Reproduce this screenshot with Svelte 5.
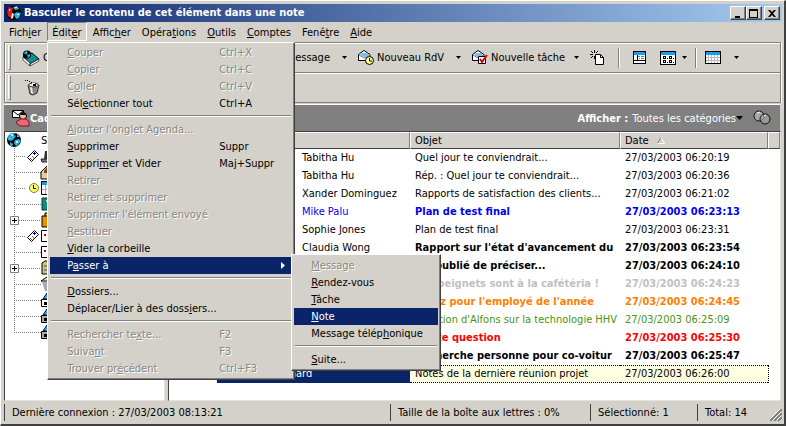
<script lang="ts">
	type Entry = { label?: string; keys?: string; off?: boolean; sub?: boolean; sep?: boolean };

	const menus = ['Fich&ier', 'Édit&er', 'Affic&her', 'Opéra&tions', '&Outils', '&Comptes', 'Fenê&tre', '&Aide'];

	const editMenu: Entry[] = [
		{ label: '&Couper', keys: 'Ctrl+X', off: true },
		{ label: '&Copier', keys: 'Ctrl+C', off: true },
		{ label: 'C&oller', keys: 'Ctrl+V', off: true },
		{ label: 'Sél&ectionner tout', keys: 'Ctrl+A' },
		{ sep: true },
		{ label: '&Ajouter l\'onglet Agenda...', off: true },
		{ label: '&Supprimer', keys: 'Suppr' },
		{ label: 'Suppri&mer et Vider', keys: 'Maj+Suppr' },
		{ label: 'Retirer', off: true },
		{ label: 'Retirer et supprimer', off: true },
		{ label: 'Supprimer l\'élément envoyé', off: true },
		{ label: '&Restituer', off: true },
		{ label: '&Vider la corbeille' },
		{ label: 'P&asser à', sub: true },
		{ sep: true },
		{ label: '&Dossiers...' },
		{ label: 'Déplacer/Lier à des doss&iers...' },
		{ sep: true },
		{ label: 'Rechercher te&xte...', keys: 'F2', off: true },
		{ label: 'Suiva&nt', keys: 'F3', off: true },
		{ label: 'Trouver pr&écédent', keys: 'Ctrl+F3', off: true }
	];

	const switchMenu: Entry[] = [
		{ label: '&Message', off: true },
		{ label: '&Rendez-vous' },
		{ label: '&Tâche' },
		{ label: '&Note' },
		{ label: 'Message télép&honique' },
		{ sep: true },
		{ label: '&Suite...' }
	];

	const mails = [
		{ from: 'Tabitha Hu', subject: 'Quel jour te conviendrait...', time: '06:20:19' },
		{ from: 'Tabitha Hu', subject: 'Rép. : Quel jour te conviendrait...', time: '06:20:36' },
		{ from: 'Xander Dominguez', subject: 'Rapports de satisfaction des clients...', time: '06:21:02' },
		{ from: 'Mike Palu', subject: 'Plan de test final', time: '06:23:13', bold: true, color: 'blue' },
		{ from: 'Sophie Jones', subject: 'Plan de test final', time: '06:23:31' },
		{ from: 'Claudia Wong', subject: 'Rapport sur l\'état d\'avancement du', time: '06:23:54', bold: true },
		{ from: '', subject: 'J\'ai oublié de préciser...', time: '06:24:10', bold: true },
		{ from: '', subject: 'Les beignets sont à la cafétéria !', time: '06:24:23', bold: true, color: 'silver' },
		{ from: '', subject: 'Votez pour l\'employé de l\'année', time: '06:24:45', bold: true, color: 'orange' },
		{ from: '', subject: 'Réaction d\'Alfons sur la technologie HHV', time: '06:25:09', color: 'green' },
		{ from: '', subject: 'Petite question', time: '06:25:30', bold: true, color: 'red' },
		{ from: '', subject: 'Recherche personne pour co-voitur', time: '06:25:47', bold: true }
	];

	const tree = [
		{ tag: 'note', icon: 'hat' },
		{ tag: '', icon: 'house' },
		{ tag: 'clock', icon: 'calendar' },
		{ tag: '', icon: 'book' },
		{ tag: 'plus', icon: 'folders' },
		{ tag: 'note', icon: 'card' },
		{ tag: '', icon: 'card' },
		{ tag: 'plus', icon: 'cabinet' },
		{ tag: '', icon: 'bin' },
		{ tag: '', icon: 'shared' },
		{ tag: '', icon: 'cabin' },
		{ tag: '', icon: 'cabin' }
	];

	let open = $state('Édit&er');

	// "Te&xt" -> ['Te', 'x', 't']
	function split(label: string) {
		const i = label.indexOf('&');
		return i < 0 ? [label, '', ''] : [label.slice(0, i), label[i + 1], label.slice(i + 2)];
	}
</script>

{#snippet mnemonic(label: string)}{@const p = split(label)}{p[0]}<u>{p[1]}</u>{p[2]}{/snippet}

{#snippet globe()}
	<svg class="icon" viewBox="0 0 16 16" aria-hidden="true">
		<circle cx="8" cy="8" r="7" fill="#000" />
		<path d="M2 5l3-4h4l-1 2 2 1-3 4-3 1-2-1zM9 8l4-1 2 2-3 4-2 1-2-3zM11 2l3 3-3 0zM4 10l3 2-1 3-2-2z" fill="#2bb3e0" />
		<path d="M5 2h2v2H5zM10 9h2v2h-2z" fill="#b8f0ff" />
	</svg>
{/snippet}

{#snippet envelope(kind: string)}
	<svg class="icon" viewBox="0 0 16 16" aria-hidden="true">
		<path d="M.5 4.500 6 .5l6 4v6H.5z" fill="#fff" stroke="#000" />
		<path d="M2 5l2-2h5l2 2-5 2z" fill="#74bff5" />
		<path d="M1 5l5 3 6-3" fill="none" stroke="#777" />
		{#if kind === 'clock'}
			<circle cx="11.500" cy="10.500" r="4" fill="#ffff8c" stroke="#000" />
			<path d="M11.500 8v3H14" fill="none" stroke="#000" />
		{:else if kind === 'task'}
			<path d="M6.500 6.500h7v7h-7z" fill="#fff" stroke="#000" />
			<path d="M8 9l2 3 5-7" fill="none" stroke="#e00000" stroke-width="2" />
		{/if}
	</svg>
{/snippet}

{#snippet drop()}
	<svg class="drop" viewBox="0 0 5 3" aria-hidden="true"><path d="M0 0h5L2.500 3z" fill="currentColor" /></svg>
{/snippet}

{#snippet entries(list: Entry[], active: string)}
	{#each list as item}
		{#if item.sep}
			<div class="rule" role="separator"></div>
		{:else}
			<div class="entry">
				<button class="item" class:off={item.off} class:active={item.label === active} role="menuitem" disabled={item.off}>
					<span class="label">{@render mnemonic(item.label ?? '')}</span>
					{#if item.keys}<span class="keys">{item.keys}</span>{/if}
					{#if item.sub}
						<svg class="arrow" viewBox="0 0 4 7" aria-hidden="true"><path d="M0 0l4 3.500L0 7z" fill="currentColor" /></svg>
					{/if}
				</button>
				{#if item.sub}
					<div class="popup submenu" role="menu">
						{@render entries(switchMenu, '&Note')}
					</div>
				{/if}
			</div>
		{/if}
	{/each}
{/snippet}

<div class="window">
	<header class="title">
		<svg class="icon" viewBox="0 0 16 16" aria-hidden="true">
			<circle cx="8" cy="8" r="7.500" fill="#000" />
			<path d="M1 7l2-5 4 1-1 4 1 3-2 3-3-2z" fill="#e31b1b" />
			<path d="M7 2l4-1 2 3-4 1zM8 9l3-2 4 1-2 5-3 1z" fill="#2bb3e0" />
			<path d="M6 8l2 1-1 4-2 1zM9 2h2v1H9zM3 4h1v2H3zM11 9h2v1h-2z" fill="#fff" />
		</svg>
		<h1>Basculer le contenu de cet élément dans une note</h1>
		<button class="cap" aria-label="Réduire"><svg viewBox="0 0 10 9"><path d="M2 7h5v2H2z" /></svg></button>
		<button class="cap" aria-label="Agrandir"><svg viewBox="0 0 10 9"><path d="M0 0h9v9H0zM1 2v6h7V2z" fill-rule="evenodd" /></svg></button>
		<button class="cap close" aria-label="Fermer"><svg viewBox="0 0 10 9"><path d="M1 1h2l2 2 2-2h2L6 4.500 9 8H7L5 6 3 8H1l3-3.500z" /></svg></button>
	</header>

	<nav class="menubar">
		{#each menus as menu}
			<div class="menu">
				<button class="top" class:open={menu === open} onclick={() => (open = open === menu ? '' : menu)}>{@render mnemonic(menu)}</button>
				{#if menu === open && menu === 'Édit&er'}
					<div class="popup dropdown" role="menu">
						{@render entries(editMenu, 'P&asser à')}
					</div>
				{/if}
			</div>
		{/each}
	</nav>

	<div class="bar">
		<i class="grip"></i>
		<button class="tool book">
			<svg class="icon wide" viewBox="0 0 19 16" aria-hidden="true">
				<path d="M2 6l9-3 7 6-9 5z" fill="#128c8c" stroke="#000" />
				<path d="M2 7l7 6v3l-7-6zM9 14l9-5v2l-9 5z" fill="#fff" stroke="#000" stroke-width=".6" />
				<circle cx="6" cy="4.500" r="4" fill="#000" />
				<path d="M3 3l2-2 2 1-2 3zM6 5l3-1v2L7 8z" fill="#2bb3e0" />
			</svg>
			<span>Carnet d'adresses</span>
		</button>
		<button class="tool mail">{@render envelope('')}<span>Nouveau Message</span></button>
		<button class="tool split" aria-label="Options de message">{@render drop()}</button>
		<button class="tool rdv">{@render envelope('clock')}<span>Nouveau RdV</span></button>
		<button class="tool split" aria-label="Options de rendez-vous">{@render drop()}</button>
		<button class="tool task">{@render envelope('task')}<span>Nouvelle tâche</span></button>
		<button class="tool split" aria-label="Options de tâche">{@render drop()}</button>
		<button class="tool page" aria-label="Nouveau document">
			<svg class="icon" viewBox="0 0 16 16" aria-hidden="true">
				<path d="M5.500 4.500h5l3 3v7h-8z" fill="#fff" stroke="#000" />
				<path d="M10.500 4.500v3h3" fill="none" stroke="#000" />
				<path d="M4 0h1v3H4zM4 6h1v3H4zM0 4h3v1H0zM6 4h2v1H6zM1 1h1v1H1zM2 2h1v1H2zM7 1h1v1H7zM6 2h1v1H6zM1 7h1v1H1zM2 6h1v1H2z" />
			</svg>
		</button>
		<i class="divider"></i>
		<button class="tool view" aria-label="Propriétés">
			<svg class="icon" viewBox="0 0 16 16" aria-hidden="true">
				<path d="M1 1h13v13H1z" />
				<path d="M2 2h11v3H2z" fill="#1a9ff0" />
				<path d="M2 5h3v5H2zM6 5h7v5H6zM2 11h11v2H2z" fill="#fff" />
				<path d="M6 6h2v1H6zM9 6h3v1H9zM7 8h1v1H7zM9 8h3v1H9z" fill="#777" />
			</svg>
		</button>
		<button class="tool grid" aria-label="Affichage">
			<svg class="icon" viewBox="0 0 16 16" aria-hidden="true">
				<path d="M0 1h16v14H0z" />
				<path d="M1 2h14v3H1z" fill="#1a9ff0" />
				<path d="M1 5h14v9H1z" fill="#fff" />
				<path d="M3 6h3v3H3zM9 6h3v3H9zM3 10h3v3H3zM9 10h3v3H9zM7 8h1v1H7zM13 8h1v1h-1zM7 12h1v1H7zM13 12h1v1h-1z" />
				<path d="M4 7h1v1H4zM10 7h1v1h-1zM4 11h1v1H4zM10 11h1v1h-1z" fill="#fff" />
			</svg>
			{@render drop()}
		</button>
		<i class="divider"></i>
		<button class="tool calendar" aria-label="Agenda">
			<svg class="icon" viewBox="0 0 16 16" aria-hidden="true">
				<path d="M0 1h16v13H0z" />
				<path d="M1 2h14v3H1z" fill="#1a9ff0" />
				<path d="M1 5h14v8H1z" fill="#bbb" />
				<path d="M1 5h2v2H1zM4 5h2v2H4zM7 5h2v2H7zM10 5h2v2h-2zM13 5h2v2h-2zM1 8h2v2H1zM4 8h2v2H4zM7 8h2v2H7zM10 8h2v2h-2zM13 8h2v2h-2zM1 11h2v2H1zM4 11h2v2H4zM7 11h2v2H7zM10 11h2v2h-2zM13 11h2v2h-2z" fill="#fff" />
			</svg>
			{@render drop()}
		</button>
	</div>

	<div class="bar second">
		<i class="grip"></i>
		<button class="tool trash" aria-label="Corbeille">
			<svg class="icon" viewBox="0 0 16 16" aria-hidden="true">
				<path d="M3 5l2 9 3 1 4-2 2-8z" fill="#8a8a8a" stroke="#333" />
				<path d="M5 7l1 6 2 1-1-7z" fill="#e8e8e8" />
				<ellipse cx="8.500" cy="5" rx="5" ry="2" fill="#ddd" stroke="#333" />
				<path d="M7 3h3v3H7z" fill="#fff" />
				<path d="M8 4h3v2H8zM0 0h1v1H0zM2 0h1v1H2zM4 1h1v1H4zM6 2h1v1H6z" />
			</svg>
		</button>
	</div>

	<div class="band">
		<svg class="icon person" viewBox="0 0 18 18" aria-hidden="true">
			<path d="M.500 1.500h11v7H.500z" fill="#fff" stroke="#000" />
			<path d="M1 2l5 4 5-4" fill="none" stroke="#000" />
			<circle cx="11" cy="7" r="3.500" fill="#f6b9a0" stroke="#000" />
			<path d="M8 5l3-2 3 2-1 1H9z" fill="#000" />
			<path d="M5 12l4-2h5l3 3v4H8l-4-3z" fill="#e86a72" stroke="#7a1820" />
		</svg>
		<strong class="folder">Cadre</strong>
		<strong>Afficher :</strong>
		<button class="filter">Toutes les catégories <svg class="drop big" viewBox="0 0 7 4" aria-hidden="true"><path d="M0 0h7L3.500 4z" /></svg></button>
		<svg class="icon rings" viewBox="0 0 18 16" aria-hidden="true">
			<circle cx="6" cy="6" r="5" fill="#aaa" stroke="#111" />
			<circle cx="12" cy="9" r="5" fill="#aaa" fill-opacity=".6" stroke="#111" />
			<path d="M4 3l3-1M11 6l2-1" stroke="#fff" />
		</svg>
	</div>

	<main>
		<aside class="tree">
			<div class="root">{@render globe()}<span>Sophie Jones</span></div>
			<ul>
				{#each tree as node}
					<li>
						{#if node.tag === 'plus'}
							<svg class="plus" viewBox="0 0 9 9" aria-hidden="true"><path d="M.500.500h8v8h-8z" fill="#fff" stroke="#808080" /><path d="M2 4h5v1H2zM4 2h1v5H4z" /></svg>
						{/if}
						<i class="dots" class:short={node.tag === 'note' || node.tag === 'clock'}></i>
						{#if node.tag === 'note'}
							<svg class="mark" viewBox="0 0 12 12" aria-hidden="true">
								<path d="M.500 7.500l7-7 4 4-7 7z" fill="#fff" stroke="#000" />
								<path d="M3 8l2 2M5 6l2 2" stroke="#666" /><path d="M7 2h1v3H7zM6 3h3v1H6z" fill="#00f" />
							</svg>
						{:else if node.tag === 'clock'}
							<svg class="mark" viewBox="0 0 12 12" aria-hidden="true">
								<circle cx="7" cy="6" r="4.500" fill="#ffff50" stroke="#777" /><path d="M6.500 3v3.500H9" fill="none" stroke="#000" />
							</svg>
						{/if}
						<svg class="icon" viewBox="0 0 16 16" aria-hidden="true">
							{#if node.icon === 'hat'}
								<path d="M3 11l1-8h6l2 8z" fill="#333" /><path d="M0 11h14v3H1z" fill="#777" stroke="#222" />
							{:else if node.icon === 'house'}
								<path d="M0 8l7-7 7 7v7H0z" fill="#d8d2a0" stroke="#000" /><path d="M3 7l3-4v6H3z" fill="#a33030" />
							{:else if node.icon === 'calendar'}
								<path d="M.500 1.500h14v13H.500z" fill="#fff" stroke="#000" /><path d="M1 2h13v3H1z" fill="#1a9ff0" /><path d="M4.500 5v9M1 9.500h13" stroke="#aaa" />
							{:else if node.icon === 'book'}
								<path d="M1 2h12v12H1z" fill="#108888" stroke="#033" /><path d="M5 4h5v2H5z" fill="#e8d840" />
							{:else if node.icon === 'folders'}
								<path d="M4 1h10v10H4z" fill="#ffb020" stroke="#000" /><path d="M1 4h9v11H1z" fill="#f09000" stroke="#000" />
							{:else if node.icon === 'card'}
								<path d="M.500 2.500h14v11H.500z" fill="#fff" stroke="#000" /><path d="M3 6h2v2H3z" fill="#d00000" />
							{:else if node.icon === 'cabinet'}
								<path d="M1 3l3-2h8v13H1z" fill="#c8c68a" stroke="#000" /><path d="M3 6h4M3 10h4" stroke="#444" />
							{:else if node.icon === 'bin'}
								<path d="M1 6l3 9h6l3-9z" fill="#aaa" /><path d="M0 5l6-4 5 4z" fill="#ddd" stroke="#000" />
							{:else}
								<path d="M2 7l4-6 5 6z" fill="#38b6e8" stroke="#000" /><path d="M.500 7.500h12v7H.500z" fill={node.icon === 'cabin' ? '#aaa' : '#fff'} stroke="#000" />
								<path d="M3 10h3v3H3z" />
							{/if}
						</svg>
					</li>
				{/each}
			</ul>
		</aside>

		<section class="list">
			<table>
				<colgroup><col class="c-mark" /><col class="c-from" /><col class="c-subject" /><col class="c-date" /><col /></colgroup>
				<thead>
					<tr>
						<th colspan="2" aria-label="De"></th>
						<th>Objet</th>
						<th>Date <svg class="sort" viewBox="0 0 8 7" aria-hidden="true"><path d="M.500 6.500L4 .500" stroke="#808080" /><path d="M4 .500l3.500 6h-7" fill="none" stroke="#fff" /></svg></th>
						<th aria-label="Autres"></th>
					</tr>
				</thead>
				<tbody>
					{#each mails as mail}
						<tr class={mail.color} class:bold={mail.bold}>
							<td></td>
							<td class="from">{mail.from}</td>
							<td>{mail.subject}</td>
							<td>27/03/2003 {mail.time}</td>
							<td></td>
						</tr>
					{/each}
					<tr class="current">
						<td colspan="2"><span class="picked">Bernard</span></td>
						<td>Notes de la dernière réunion projet</td>
						<td>27/03/2003 06:26:00</td>
						<td></td>
					</tr>
				</tbody>
			</table>
		</section>
	</main>

	<footer>
		<span class="last">Dernière connexion : 27/03/2003 08:13:21</span>
		<span class="quota">Taille de la boîte aux lettres : 0%</span>
		<span class="count">Sélectionné: 1</span>
		<span class="total">Total: 14</span>
		<svg class="resize" viewBox="0 0 12 12" aria-hidden="true">
			<path d="M0 12L12 0M4 12l8-8M8 12l4-4" stroke="#808080" stroke-width="2" />
			<path d="M-1 11L11-1M3 11l8-8M7 11l4-4" stroke="#fff" />
		</svg>
	</footer>
</div>

<style>
	:global(body) {
		background: #d3d1c9;
	}

	.window {
		--face: #d3d1c9;
		--navy: #0a246a;
		box-sizing: border-box;
		min-height: 100vh;
		display: flex;
		flex-direction: column;
		padding: 2px 2px 1px 3px;
		background: var(--face);
		border: 1px solid #fff;
		border-right: 2px solid #404040;
		border-bottom: 2px solid #404040;
		font: 11px/17px "DejaVu Sans Condensed", Tahoma, sans-serif;
		color: #000;
		cursor: default;
	}

	button {
		font: inherit;
		color: inherit;
		background: none;
		border: 0;
		padding: 0;
		text-align: left;
		white-space: nowrap;
	}

	svg {
		display: block;
		flex: none;
		overflow: visible;
	}

	.icon {
		width: 16px;
		height: 16px;
	}

	.wide {
		width: 19px;
	}

	.drop {
		width: 5px;
		height: 3px;
	}

	.big {
		width: 7px;
		height: 4px;
		color: #000;
	}

	.title {
		display: flex;
		align-items: center;
		height: 18px;
		margin-top: 1px;
		padding: 0 2px;
		background: linear-gradient(90deg, #0a246a, #a6caf0);
		color: #fff;
	}

	.title h1 {
		flex: 1;
		margin: 0 0 0 2px;
		font-size: 11px;
		line-height: 18px;
		white-space: nowrap;
		overflow: hidden;
	}

	.cap {
		display: grid;
		place-items: center;
		box-sizing: border-box;
		width: 16px;
		height: 14px;
		background: var(--face);
		border: 1px solid;
		border-color: #fff #404040 #404040 #fff;
		box-shadow: inset -1px -1px #808080;
	}

	.cap svg {
		width: 10px;
		height: 9px;
	}

	.close {
		margin-left: 2px;
	}

	.menubar {
		display: flex;
		height: 20px;
		gap: 1px;
	}

	.menu {
		position: relative;
	}

	.top {
		height: 19px;
		padding: 1px 4px;
		border: 1px solid transparent;
	}

	.open {
		border-color: #808080 #fff #fff #808080;
	}

	.popup {
		position: absolute;
		z-index: 2;
		box-sizing: border-box;
		background: var(--face);
		border: 1px solid;
		border-color: #fff #404040 #404040 #fff;
		box-shadow: inset -1px -1px #808080;
	}

	.dropdown {
		top: 100%;
		left: 0;
		width: 248px;
		padding: 1px 2px 2px;
	}

	.submenu {
		top: -3px;
		left: 241px;
		width: 150px;
		padding: 2px;
	}

	.entry {
		position: relative;
	}

	.item {
		display: flex;
		align-items: center;
		width: 100%;
		height: 17px;
		padding: 0 7px 0 17px;
	}

	.label {
		flex: 1;
	}

	.keys {
		width: 66px;
	}

	.off {
		color: #868686;
		text-shadow: 1px 1px #fff;
	}

	.active {
		background: var(--navy);
		color: #fff;
	}

	.arrow {
		width: 4px;
		height: 7px;
	}

	.rule {
		height: 1px;
		margin: 3px 1px 4px;
		border-top: 1px solid #808080;
		background: #fff;
	}

	.bar {
		display: flex;
		align-items: center;
		height: 29px;
		border: 1px solid #808080;
		border-bottom: 0;
		box-shadow: inset 1px 1px #fff, 1px 0 #fff;
		margin-right: 1px;
	}

	.second {
		border-bottom: 1px solid #808080;
	}

	.grip {
		width: 1px;
		height: 23px;
		margin: 0 10px 0 3px;
		border: 1px solid;
		border-color: #fff #808080 #808080 #fff;
	}

	.divider {
		width: 1px;
		height: 20px;
		background: #fff;
		border-left: 1px solid #808080;
	}

	.tool {
		display: flex;
		align-items: center;
		height: 23px;
	}

	.tool span {
		margin-left: 3px;
	}

	.book {
		width: 189px;
	}

	.mail {
		width: 120px;
		justify-content: flex-end;
	}

	.split {
		width: 28px;
		justify-content: center;
	}

	.rdv {
		width: 86px;
	}

	.task {
		width: 90px;
	}

	.page {
		width: 28px;
	}

	.view {
		width: 40px;
		justify-content: center;
	}

	.grid {
		width: 35px;
		gap: 6px;
	}

	.calendar {
		gap: 13px;
		padding-left: 8px;
	}

	.trash {
		padding-left: 4px;
	}

	.band {
		display: flex;
		align-items: center;
		height: 26px;
		margin: 1px 2px 0 0;
		padding: 0 9px 0 8px;
		border-top: 1px solid #fff;
		background: #808080;
		color: #fff;
	}

	.person {
		width: 18px;
		height: 18px;
	}

	.folder {
		flex: 1;
	}

	.filter {
		display: flex;
		align-items: center;
		margin: 0 10px 0 4px;
	}

	.rings {
		width: 18px;
	}

	main {
		flex: 1;
		display: flex;
		gap: 3px;
		margin-right: 1px;
	}

	.tree,
	.list {
		box-sizing: border-box;
		background: #fff;
		border: 1px solid;
		border-color: #404040 #e4e2da #e4e2da #404040;
	}

	.tree {
		width: 161px;
		flex: none;
	}

	.root {
		display: flex;
		align-items: center;
		gap: 19px;
		height: 16px;
		padding-left: 1px;
	}

	ul {
		list-style: none;
		margin: 0 0 0 9px;
		padding: 0;
		/* the trunk stops at the middle of the last node */
		background: repeating-linear-gradient(#808080 0 1px, #fff 1px 2px) 0 0 / 1px 184px no-repeat;
	}

	li {
		display: flex;
		align-items: center;
		height: 16px;
	}

	.plus {
		width: 9px;
		height: 9px;
		margin: 0 -5px 0 -4px;
	}

	.dots {
		flex: none;
		width: 27px;
		height: 1px;
		background: repeating-linear-gradient(90deg, #808080 0 1px, transparent 1px 2px);
	}

	.plus + .dots {
		margin-left: 5px;
		width: 22px;
	}

	.short {
		width: 12px;
	}

	.mark {
		width: 12px;
		height: 12px;
		margin: 0 2px 0 1px;
	}

	.list {
		flex: 1;
		min-width: 0;
	}

	table {
		width: 100%;
		table-layout: fixed;
		border-collapse: separate;
		border-spacing: 0;
	}

	.c-mark {
		width: 128px;
	}

	.c-from {
		width: 113px;
	}

	.c-subject {
		width: 210px;
	}

	.c-date {
		width: 148px;
	}

	th {
		height: 15px;
		padding: 0 0 0 4px;
		background: var(--face);
		border: 1px solid;
		border-color: #fff #808080 #404040 #fff;
		line-height: 15px;
		font-weight: normal;
		text-align: left;
	}

	.sort {
		display: inline-block;
		width: 8px;
		height: 7px;
		margin-left: 5px;
	}

	td {
		height: 18px;
		padding: 0 5px;
		line-height: 18px;
		white-space: nowrap;
		overflow: hidden;
	}

	.bold {
		font-weight: bold;
	}

	.from {
		font-weight: normal;
	}

	.blue {
		color: #0000f0;
	}

	.silver {
		color: #c0c0c0;
	}

	.orange {
		color: #ff8000;
	}

	.green {
		color: #4a9410;
	}

	.red {
		color: #f00;
	}

	.current td {
		background: #ffffe1;
		height: 16px;
		line-height: 16px;
		border: 1px dotted #000;
		border-width: 1px 0;
	}

	.current td:first-child {
		padding: 0 0 0 48px;
		background: #fff;
		border: 0;
	}

	.current td:last-child {
		background: #fff;
		border-width: 0 0 0 1px;
	}

	.picked {
		display: block;
		padding-left: 56px;
		background: var(--navy);
		color: #fff;
		line-height: 18px;
	}

	footer {
		display: flex;
		height: 17px;
		margin: 3px 0 2px;
		line-height: 17px;
		white-space: nowrap;
	}

	footer span {
		box-sizing: border-box;
		padding-left: 7px;
		border-left: 1px solid #404040;
	}

	.last {
		flex: 1;
	}

	.quota {
		width: 200px;
	}

	.count {
		width: 107px;
	}

	.total {
		width: 73px;
	}

	.resize {
		width: 12px;
		height: 12px;
		align-self: end;
		overflow: hidden;
	}
</style>
